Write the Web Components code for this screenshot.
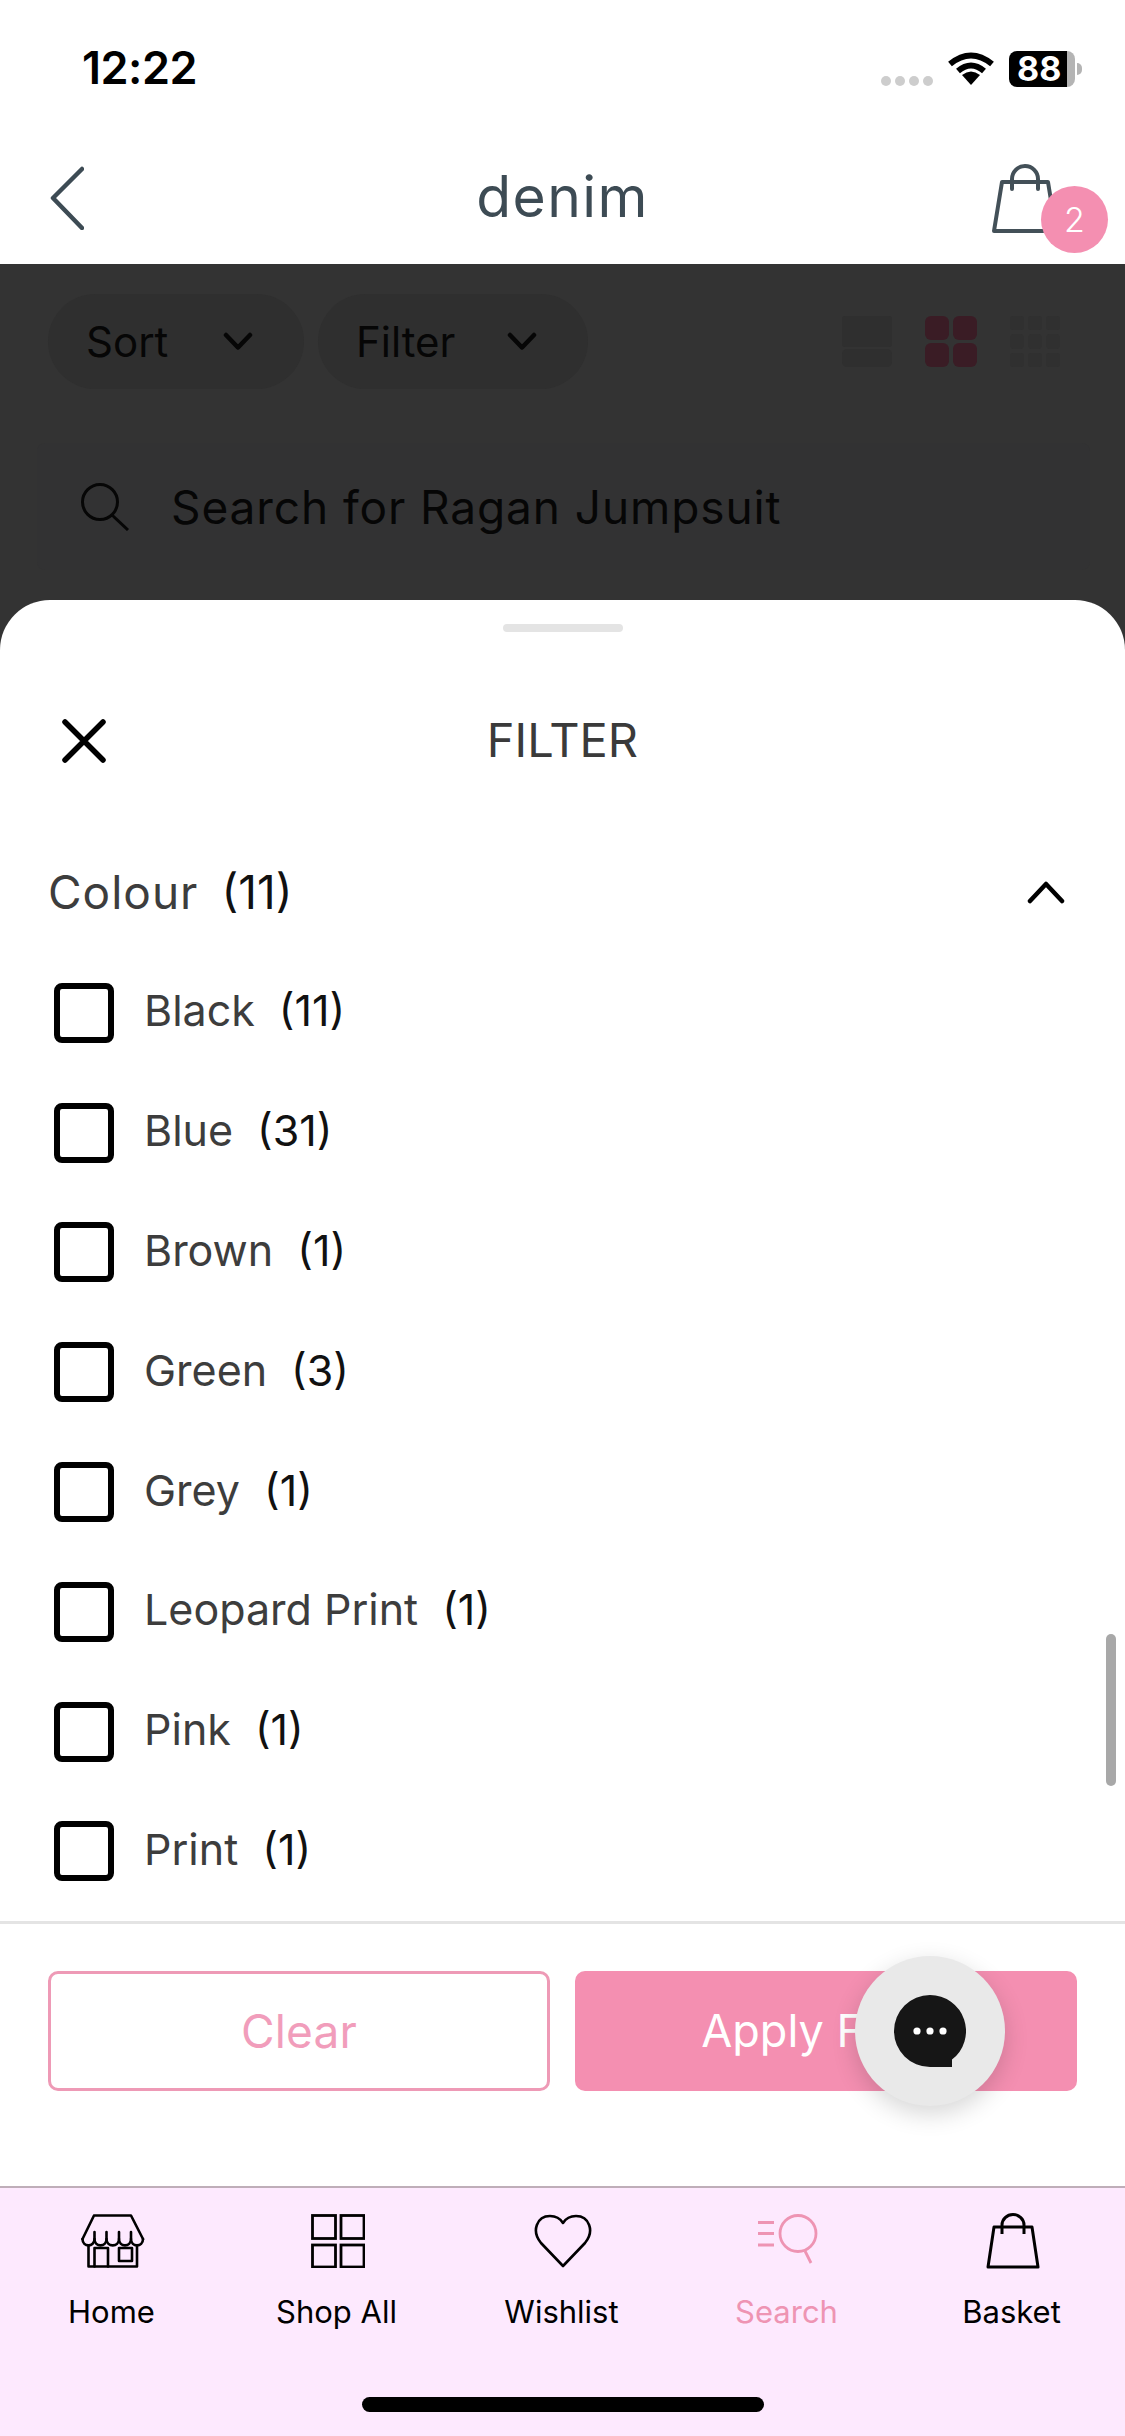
<!DOCTYPE html>
<html lang="en">
<head>
<meta charset="utf-8">
<title>denim</title>
<style>
  html, body { margin: 0; padding: 0; }
  body { width: 1125px; height: 2436px; overflow: hidden; font-family: Inter, "Open Sans", sans-serif; background: #fff; }
  #app { display: flex; flex-direction: column; height: 2436px; position: relative; }
</style>
</head>
<body>
<div id="app">
  <app-status time="12:22" battery="88"></app-status>
  <app-header title="denim" count="2"></app-header>
  <dim-backdrop>
    <filter-pill slot="pills" width="256">Sort</filter-pill>
    <filter-pill slot="pills" width="270">Filter</filter-pill>
  </dim-backdrop>
  <filter-sheet title="FILTER" group="Colour" group-count="11">
    <filter-row count="11">Black</filter-row>
    <filter-row count="31">Blue</filter-row>
    <filter-row count="1">Brown</filter-row>
    <filter-row count="3">Green</filter-row>
    <filter-row count="1">Grey</filter-row>
    <filter-row count="1">Leopard Print</filter-row>
    <filter-row count="1">Pink</filter-row>
    <filter-row count="1">Print</filter-row>
  </filter-sheet>
  <tab-bar>
    <tab-item label="Home" icon="home"></tab-item>
    <tab-item label="Shop All" icon="grid"></tab-item>
    <tab-item label="Wishlist" icon="heart"></tab-item>
    <tab-item label="Search" icon="search" active></tab-item>
    <tab-item label="Basket" icon="bag"></tab-item>
  </tab-bar>
  <chat-fab></chat-fab>
</div>
<script>
class AppStatus extends HTMLElement {
  connectedCallback() {
    this.attachShadow({ mode: 'open' });
    this.shadowRoot.innerHTML = `
      <style>
        :host { display: flex; height: 100px; box-sizing: border-box; padding: 36px 43px 0 82px; justify-content: space-between; align-items: flex-start; background: #fff; }
        .time { font: 600 45px/64px Inter, sans-serif; color: #000; letter-spacing: -0.5px; }
        .right { display: flex; align-items: flex-start; margin-top: 15px; }
        .dots { display: flex; gap: 4px; margin: 25px 15px 0 0; }
        .dots i { width: 10px; height: 10px; border-radius: 50%; background: #cdcdcd; }
        svg { display: block; }
        .batt { width: 66px; height: 36px; margin-left: 15px; border-radius: 8px; background: linear-gradient(90deg, #000 0 58px, #b4b4b4 58px); color: #fff; font: 700 34px/36px Inter, sans-serif; box-sizing: border-box; padding-left: 8px; }
        .nub { width: 5px; height: 12px; margin: 12px 0 0 2px; background: #b4b4b4; border-radius: 0 6px 6px 0; }
      </style>
      <div class="time">${this.getAttribute('time')}</div>
      <div class="right">
        <div class="dots"><i></i><i></i><i></i><i></i></div>
        <svg width="46" height="34" viewBox="0 0 46 34" fill="none" stroke="#000" stroke-width="6">
          <path d="M2 13 Q23 -4 44 13"/>
          <path d="M10 20 Q23 9 36 20"/>
          <path d="M14 24 L23 34 L32 24 Q23 17 14 24Z" fill="#000" stroke="none"/>
        </svg>
        <div class="batt">${this.getAttribute('battery')}</div>
        <div class="nub"></div>
      </div>`;
  }
}

class AppHeader extends HTMLElement {
  connectedCallback() {
    this.attachShadow({ mode: 'open' });
    this.shadowRoot.innerHTML = `
      <style>
        :host { display: grid; grid-template-columns: minmax(0, 1fr) auto minmax(0, 1fr); align-items: start; height: 164px; box-sizing: border-box; padding: 0 17px; background: #fff; }
        .title { font: 400 57px/64px Inter, sans-serif; color: #3d4b54; margin-top: 65px; letter-spacing: 1.400px; }
        .back { display: block; margin: 66px 0 0 33px; }
        .bag { justify-self: end; position: relative; width: 116px; height: 90px; margin-top: 64px; }
        .bag svg { display: block; }
        .badge { position: absolute; left: 49px; top: 22px; width: 67px; height: 67px; border-radius: 50%; background: #f48fb1; color: #fff; font: 300 34px/67px Inter, sans-serif; text-align: center; }
      </style>
      <svg class="back" width="34" height="64" viewBox="0 0 34 64" fill="none" stroke="#3d4b54" stroke-width="4.5" stroke-linecap="round" stroke-linejoin="round"><path d="M32 3 L3 32 L32 62"/></svg>
      <div class="title">${this.getAttribute('title')}</div>
      <div class="bag">
        <svg width="66" height="70" viewBox="0 0 66 70" fill="none" stroke="#435058" stroke-width="4" stroke-linejoin="round" stroke-linecap="round">
          <path d="M10 18 H56 L64 67 H2 Z"/>
          <path d="M20 25 V15 a13 13 0 0 1 26 0 V25"/>
        </svg>
        <div class="badge">${this.getAttribute('count')}</div>
      </div>`;
  }
}

class FilterPill extends HTMLElement {
  connectedCallback() {
    this.attachShadow({ mode: 'open' });
    this.shadowRoot.innerHTML = `
      <style>
        :host { display: flex; align-items: center; justify-content: space-between; box-sizing: border-box; height: 95px; width: ${this.getAttribute('width')}px; padding: 0 51px 0 38px; border-radius: 48px; background: #2f2f2f; color: #060606; font: 400 42px/50px Inter, sans-serif; }
      </style>
      <span><slot></slot></span>
      <svg width="30" height="19" viewBox="0 0 30 19" fill="none" stroke="#060606" stroke-width="4.500" stroke-linecap="round" stroke-linejoin="round"><path d="M3 3 L15 15.500 L27 3"/></svg>`;
  }
}

class DimBackdrop extends HTMLElement {
  connectedCallback() {
    this.attachShadow({ mode: 'open' });
    this.shadowRoot.innerHTML = `
      <style>
        :host { display: flex; flex-direction: column; height: 336px; box-sizing: border-box; padding-top: 30px; background: #333; }
        .bar { display: flex; align-items: center; height: 95px; padding: 0 65px 0 48px; }
        .pills { display: flex; gap: 14px; flex: 1; }
        .views { display: flex; align-items: center; gap: 33px; }
        .search { display: flex; align-items: center; height: 127px; margin: 54px 35px 0 37px; padding-left: 44px; border-radius: 8px; background: #323233; color: #060606; font: 400 46px/56px Inter, sans-serif; letter-spacing: 0.9px; }
        .search span { margin-left: 42px; }
        svg { display: block; }
      </style>
      <div class="bar">
        <div class="pills"><slot name="pills"></slot></div>
        <div class="views">
          <svg width="50" height="51" viewBox="0 0 50 51" fill="#2f2f2f"><rect width="50" height="31" rx="3"/><rect y="33" width="50" height="18" rx="5"/></svg>
          <svg width="52" height="51" viewBox="0 0 52 51" fill="#3a1c25"><rect width="24" height="24" rx="6"/><rect x="28" width="24" height="24" rx="6"/><rect y="27" width="24" height="24" rx="6"/><rect x="28" y="27" width="24" height="24" rx="6"/></svg>
          <svg width="50" height="51" viewBox="0 0 50 51" fill="#303030"><rect width="14" height="14" rx="3"/><rect x="18" width="14" height="14" rx="3"/><rect x="36" width="14" height="14" rx="3"/><rect y="18" width="14" height="15" rx="4"/><rect x="18" y="18" width="14" height="15" rx="4"/><rect x="36" y="18" width="14" height="15" rx="4"/><rect y="37" width="14" height="14" rx="3"/><rect x="18" y="37" width="14" height="14" rx="3"/><rect x="36" y="37" width="14" height="14" rx="3"/></svg>
        </div>
      </div>
      <div class="search">
        <svg width="48" height="48" viewBox="0 0 48 48" fill="none" stroke="#060606" stroke-width="3"><circle cx="19" cy="19" r="17.5"/><path d="M31 32 L47 47"/></svg>
        <span>Search for Ragan Jumpsuit</span>
      </div>`;
  }
}

class FilterRow extends HTMLElement {
  connectedCallback() {
    this.attachShadow({ mode: 'open' });
    this.shadowRoot.innerHTML = `
      <style>
        :host { display: flex; align-items: center; flex: none; height: 119.8px; padding-left: 54px; font: 400 43px/52px Inter, sans-serif; color: #3d3d3d; }
        .box { width: 60px; height: 60px; box-sizing: border-box; border: 6px solid #000; border-radius: 8px; margin-right: 30px; }
        span { margin-top: -5px; }
        .n { margin-left: 24px; color: #111; font-size: 43px; }
      </style>
      <div class="box"></div>
      <span><slot></slot></span>
      <span class="n">(${this.getAttribute('count')})</span>`;
  }
}

class FilterSheet extends HTMLElement {
  connectedCallback() {
    this.attachShadow({ mode: 'open' });
    this.shadowRoot.innerHTML = `
      <style>
        :host { display: flex; flex-direction: column; flex: 1; min-height: 0; position: relative; background: #333; }
        .sheet { display: flex; flex-direction: column; flex: 1; min-height: 0; position: relative; background: #fff; border-radius: 50px 50px 0 0; }
        .handle { width: 120px; height: 8px; margin: 24px auto 0; border-radius: 4px; background: #e4e4e4; }
        .head { display: flex; align-items: center; justify-content: center; position: relative; height: 80px; margin-top: 68px; font: 400 47px/80px Inter, sans-serif; color: #3a3a3a; }
        .close { position: absolute; left: 62px; top: 19px; }
        .group { display: flex; align-items: center; height: 80px; margin: 72px 0 21px; padding: 0 60px 0 48px; font: 400 46px/56px Inter, sans-serif; color: #3d3d3d; }
        .group > span:first-child { letter-spacing: 1px; }
        .group .n { margin-left: 23px; color: #111; flex: 1; }
        .list { display: flex; flex-direction: column; flex: 1; min-height: 0; overflow: hidden; }
        .thumb { position: absolute; right: 9px; top: 1034px; width: 10px; height: 152px; border-radius: 5px; background: #a8a8a8; }
        .foot { display: grid; grid-template-columns: 502px 502px; gap: 25px; height: 265px; box-sizing: border-box; padding: 47px 48px 0; border-top: 3px solid #e4e4e4; background: #fff; }
        .btn { height: 120px; box-sizing: border-box; border-radius: 10px; display: flex; align-items: center; justify-content: center; font: 400 46px/56px Inter, sans-serif; }
        .clear { border: 3.5px solid #ee9ab6; color: #f19dbb; background: #fff; letter-spacing: 0.2px; }
        .apply { background: #f48fb1; color: #fff; font-size: 45px; padding-left: 16px; white-space: nowrap; }
        svg { display: block; }
      </style>
      <div class="sheet">
        <div class="handle"></div>
        <div class="head">
          <svg class="close" width="44" height="44" viewBox="0 0 44 44" fill="none" stroke="#000" stroke-width="5.5" stroke-linecap="round"><path d="M3 3 L41 41 M41 3 L3 41"/></svg>
          ${this.getAttribute('title')}
        </div>
        <div class="group">
          <span>${this.getAttribute('group')}</span>
          <span class="n">(${this.getAttribute('group-count')})</span>
          <svg width="38" height="24" viewBox="0 0 38 24" fill="none" stroke="#000" stroke-width="4.5" stroke-linecap="round" stroke-linejoin="round"><path d="M3 21 L19 4 L35 21"/></svg>
        </div>
        <div class="list"><slot></slot></div>
        <div class="thumb"></div>
        <div class="foot">
          <div class="btn clear">Clear</div>
          <div class="btn apply">Apply Filters</div>
        </div>
      </div>`;
  }
}

const TAB_ICONS = {
  home: `<svg width="64" height="54" viewBox="0 0 64 54" fill="none" stroke="currentColor" stroke-width="2.6" stroke-linejoin="round" stroke-linecap="round">
    <path d="M13 1.5 H50 L62 25 M13 1.5 L1.5 25"/>
    <path d="M1.5 25 c0 8.5 12 8.5 12 0 c0 8.5 12 8.5 12 0 c0 8.5 12.500 8.500 12.500 0 c0 8.500 12 8.500 12 0 c0 8.500 12 8.500 12 0"/>
    <path d="M13.500 18 V25 M25.500 18 V25 M38 18 V25 M50 18 V25"/>
    <path d="M7.500 32 V52.500 H56 V32"/>
    <path d="M13.500 52.500 V34 H27 V52.500"/>
    <rect x="38" y="34" width="13" height="13"/>
  </svg>`,
  grid: `<svg width="54" height="54" viewBox="0 0 54 54" fill="none" stroke="currentColor" stroke-width="2.800">
    <rect x="1.500" y="1.500" width="23" height="23"/><rect x="30" y="1.500" width="23" height="23"/>
    <rect x="1.500" y="31" width="23" height="22"/><rect x="30" y="31" width="23" height="22"/>
  </svg>`,
  heart: `<svg width="58" height="54" viewBox="0 0 58 54" fill="none" stroke="currentColor" stroke-width="2.600" stroke-linejoin="round">
    <path d="M29 52 L7 29 C-3 17 3 2 16 2 C22 2 26.500 5 29 9 C31.500 5 36 2 42 2 C55 2 61 17 51 29 Z"/>
  </svg>`,
  search: `<svg width="60" height="54" viewBox="0 0 60 54" fill="none" stroke="currentColor" stroke-width="2.800">
    <path d="M0 8.500 H16 M0 19.500 H16 M0 31 H16"/>
    <circle cx="40" cy="19.500" r="18"/>
    <path d="M47 37 L53 49"/>
  </svg>`,
  bag: `<svg width="54" height="56" viewBox="0 0 54 56" fill="none" stroke="currentColor" stroke-width="3" stroke-linejoin="round">
    <path d="M8 14 H46 L52 54 H2 Z"/>
    <path d="M16 21 V12 a11 10.500 0 0 1 22 0 V21"/>
  </svg>`
};

class TabItem extends HTMLElement {
  connectedCallback() {
    this.attachShadow({ mode: 'open' });
    const active = this.hasAttribute('active');
    this.shadowRoot.innerHTML = `
      <style>
        :host { display: flex; flex-direction: column; align-items: center; padding-top: 25px; color: ${active ? '#ee94b3' : '#000'}; }
        .icon { height: 56px; display: flex; align-items: center; }
        .label { margin-top: 25px; margin-right: 2px; font: 400 31px/36px Inter, sans-serif; }
        svg { display: block; }
      </style>
      <div class="icon">${TAB_ICONS[this.getAttribute('icon')]}</div>
      <div class="label">${this.getAttribute('label')}</div>`;
  }
}

class TabBar extends HTMLElement {
  connectedCallback() {
    this.attachShadow({ mode: 'open' });
    this.shadowRoot.innerHTML = `
      <style>
        :host { display: flex; flex-direction: column; flex: none; height: 250px; box-sizing: border-box; border-top: 2px solid #bfaeb9; background: #fde9fe; }
        .tabs { display: grid; grid-template-columns: repeat(5, 225px); height: 209px; }
        .home { width: 402px; height: 15px; margin: 0 auto; border-radius: 8px; background: #000; }
      </style>
      <div class="tabs"><slot></slot></div>
      <div class="home"></div>`;
  }
}

class ChatFab extends HTMLElement {
  connectedCallback() {
    this.attachShadow({ mode: 'open' });
    this.shadowRoot.innerHTML = `
      <style>
        :host { position: absolute; left: 855px; top: 1956px; width: 150px; height: 150px; border-radius: 50%; background: #e9e9e9; box-shadow: 0 8px 24px rgba(0,0,0,.16); display: flex; align-items: center; justify-content: center; }
        svg { display: block; }
      </style>
      <svg width="72" height="72" viewBox="0 0 72 72">
        <path d="M36 0 A36 36 0 0 1 58 64.500 V72 H36 A36 36 0 0 1 36 0 Z" fill="#161616"/>
        <circle cx="23" cy="36" r="3.600" fill="#fff"/><circle cx="36" cy="36" r="3.600" fill="#fff"/><circle cx="49" cy="36" r="3.600" fill="#fff"/>
      </svg>`;
  }
}

customElements.define('app-status', AppStatus);
customElements.define('app-header', AppHeader);
customElements.define('filter-pill', FilterPill);
customElements.define('dim-backdrop', DimBackdrop);
customElements.define('filter-row', FilterRow);
customElements.define('filter-sheet', FilterSheet);
customElements.define('tab-item', TabItem);
customElements.define('tab-bar', TabBar);
customElements.define('chat-fab', ChatFab);
</script>
</body>
</html>
